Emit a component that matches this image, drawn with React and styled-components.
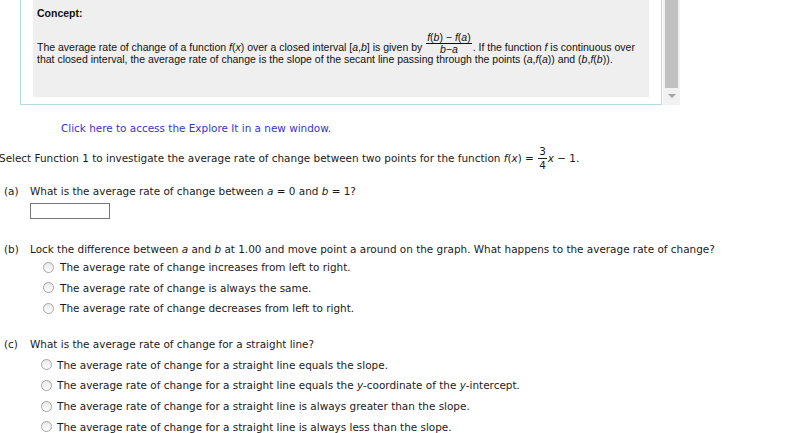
import React from 'react';
import styled, { createGlobalStyle } from 'styled-components';

const Global = createGlobalStyle`
  html, body { margin: 0; padding: 0; background: #fff; overflow: hidden; }
  body { font-family: "DejaVu Sans", Verdana, sans-serif; font-size: 10.45px; color: #1a1a1a; }
`;

const Page = styled.div`
  width: 803px;
  height: 433px;
  overflow: hidden;
`;

const FrameRow = styled.div`
  display: flex;
  align-items: flex-start;
  padding-left: 20px;
`;

const Frame = styled.div`
  width: 616px;
  height: 97px;
  padding: 0 12px 7px 12px;
  border: 1px solid #b3dbe2;
  border-top: none;
`;

const Concept = styled.div`
  height: 97px;
  box-sizing: border-box;
  background: #efefef;
  padding: 7px 4px;
  font-family: "Liberation Sans", Arial, sans-serif;
  font-size: 10.5px;
  color: #111;
`;

const ConceptTitle = styled.div`
  font-weight: bold;
  line-height: 12px;
  margin-bottom: 22px;
`;

const ConceptText = styled.div`
  line-height: 12px;
`;

/* fraction that sits over the text line without making it taller */
const InlineFrac = styled.span`
  display: inline-flex;
  flex-direction: column;
  justify-content: flex-end;
  align-items: center;
  vertical-align: top;
  height: 12px;
  line-height: 10.5px;
  margin: 0 1px;
  position: relative;
  top: 1px;
`;

const Frac = styled.span`
  display: inline-flex;
  flex-direction: column;
  align-items: center;
  vertical-align: middle;
  margin: 0 1px;
  line-height: 13px;
`;

const Num = styled.span`
  border-bottom: 1px solid currentColor;
  padding: 0 1px;
`;

const Den = styled.span`
  padding: 0 1px;
`;

const Scrollbar = styled.div`
  width: 17px;
  height: 105px;
  margin-left: 1px;
  background: #f1f1f1;
  display: flex;
  flex-direction: column;
  align-items: center;
`;

const Thumb = styled.div`
  width: 13px;
  height: 88px;
  background: #c1c1c1;
`;

const Arrow = styled.div`
  margin-top: 6px;
  width: 0;
  height: 0;
  border-left: 4px solid transparent;
  border-right: 4px solid transparent;
  border-top: 4px solid #a3a3a3;
`;

const LinkLine = styled.div`
  margin: 16px 0 0 61px;
  line-height: 14px;
  color: #3535c8;
`;

const Intro = styled.div`
  margin: 9px 0 0 -1px;
  height: 28px;
  display: flex;
  align-items: center;
  white-space: nowrap;
`;

const Q = styled.div`
  display: flex;
  margin-top: ${({ mt }) => mt}px;
  line-height: 14px;
  padding-left: 4px;
  white-space: nowrap;
`;

const QLabel = styled.span`
  width: 26px;
  flex: none;
`;

const AnswerBox = styled.div`
  margin: 5px 0 0 30px;
  width: 78px;
  height: 14px;
  border: 1px solid #777;
`;

const Options = styled.div`
  margin-top: ${({ mt }) => mt}px;
  padding-left: ${({ pl }) => pl}px;
`;

const Option = styled.div`
  display: flex;
  align-items: center;
  height: ${({ h }) => h}px;
  white-space: nowrap;
`;

const Radio = styled.span`
  width: 9px;
  height: 9px;
  border-radius: 50%;
  border: 1px solid #a5a5a5;
  background: linear-gradient(#e9e9e9, #ffffff);
  margin-right: ${({ gap }) => gap}px;
  flex: none;
`;

const I = styled.i`
  font-style: italic;
`;

const bOptions = [
  'The average rate of change increases from left to right.',
  'The average rate of change is always the same.',
  'The average rate of change decreases from left to right.',
];

const cOptions = [
  <>The average rate of change for a straight line equals the slope.</>,
  <>
    The average rate of change for a straight line equals the <I>y</I>-coordinate of the <I>y</I>-intercept.
  </>,
  <>The average rate of change for a straight line is always greater than the slope.</>,
  <>The average rate of change for a straight line is always less than the slope.</>,
];

export default function App() {
  return (
    <Page>
      <Global />
      <FrameRow>
        <Frame>
          <Concept>
            <ConceptTitle>Concept:</ConceptTitle>
            <ConceptText>
              The average rate of change of a function <I>f</I>(<I>x</I>) over a closed interval [<I>a</I>,<I>b</I>] is given by{' '}
              <InlineFrac>
                <Num>
                  <I>f</I>(<I>b</I>) − <I>f</I>(<I>a</I>)
                </Num>
                <Den>
                  <I>b</I>−<I>a</I>
                </Den>
              </InlineFrac>
              . If the function <I>f</I> is continuous over
              <br />
              that closed interval, the average rate of change is the slope of the secant line passing through the points (<I>a</I>,<I>f</I>(<I>a</I>)) and (<I>b</I>,<I>f</I>(<I>b</I>)).
            </ConceptText>
          </Concept>
        </Frame>
        <Scrollbar>
          <Thumb />
          <Arrow />
        </Scrollbar>
      </FrameRow>

      <LinkLine>Click here to access the Explore It in a new window.</LinkLine>

      <Intro>
        Select Function 1 to investigate the average rate of change between two points for the function&nbsp;<I>f</I>(<I>x</I>)&nbsp;=&nbsp;
        <Frac>
          <Num>3</Num>
          <Den>4</Den>
        </Frac>
        <I>x</I>&nbsp;−&nbsp;1.
      </Intro>

      <Q mt={12}>
        <QLabel>(a)</QLabel>
        <span>
          What is the average rate of change between <I>a</I> = 0 and <I>b</I> = 1?
        </span>
      </Q>
      <AnswerBox />

      <Q mt={23}>
        <QLabel>(b)</QLabel>
        <span>
          Lock the difference between <I>a</I> and <I>b</I> at 1.00 and move point a around on the graph. What happens to the average rate of change?
        </span>
      </Q>
      <Options mt={1} pl={43}>
        {bOptions.map((t) => (
          <Option key={t} h={20.5}>
            <Radio gap={6} />
            <span>{t}</span>
          </Option>
        ))}
      </Options>

      <Q mt={18}>
        <QLabel>(c)</QLabel>
        <span>What is the average rate of change for a straight line?</span>
      </Q>
      <Options mt={4} pl={41}>
        {cOptions.map((t, i) => (
          <Option key={i} h={20.67}>
            <Radio gap={5} />
            <span>{t}</span>
          </Option>
        ))}
      </Options>
    </Page>
  );
}
